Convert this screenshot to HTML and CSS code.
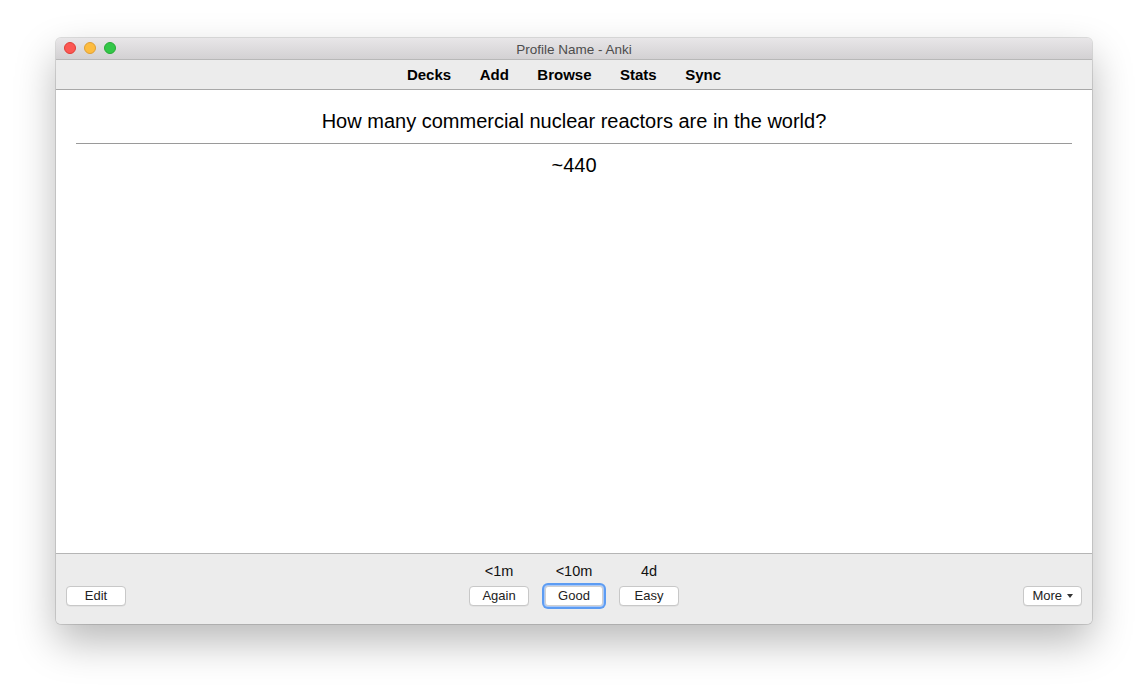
FILE: index.html
```html
<!DOCTYPE html>
<html>
<head>
<meta charset="utf-8">
<link rel="stylesheet" href="styles.css">
</head>
<body>
<div class="window">
  <div class="titlebar">
    <div class="lights">
      <span class="light red"></span>
      <span class="light yellow"></span>
      <span class="light green"></span>
    </div>
    <div class="title">Profile Name - Anki</div>
  </div>
  <div class="toolbar">
    <span class="tb">Decks</span>
    <span class="tb">Add</span>
    <span class="tb">Browse</span>
    <span class="tb">Stats</span>
    <span class="tb">Sync</span>
  </div>
  <div class="content">
    <div class="q">How many commercial nuclear reactors are in the world?</div>
    <hr class="sep">
    <div class="a">~440</div>
  </div>
  <div class="bottombar">
    <div class="side left"><button class="btn">Edit</button></div>
    <div class="answers">
      <div class="ans"><div class="lab">&lt;1m</div><button class="btn">Again</button></div>
      <div class="ans"><div class="lab">&lt;10m</div><button class="btn focus">Good</button></div>
      <div class="ans"><div class="lab">4d</div><button class="btn">Easy</button></div>
    </div>
    <div class="side right"><button class="btn more">More <span class="caret"></span></button></div>
  </div>
</div>
</body>
</html>
```
FILE: styles.css
```css
html, body {
  margin: 0;
  padding: 0;
  background: #ffffff;
  font-family: "Liberation Sans", Arial, sans-serif;
}
body {
  padding: 38px 56px 0 56px;
  height: 698px;
  box-sizing: border-box;
}
.window {
  width: 1036px;
  height: 586px;
  border-radius: 5px;
  overflow: hidden;
  display: flex;
  flex-direction: column;
  box-shadow: 0 0 0 1px rgba(0,0,0,0.12), 0 18px 40px rgba(0,0,0,0.28);
  background: #ececec;
}
.titlebar {
  height: 22px;
  flex: none;
  background: linear-gradient(#e8e6e8, #d3d1d3);
  position: relative;
  display: flex;
  align-items: center;
  justify-content: center;
  border-bottom: 1px solid #b8b8b8;
  box-sizing: border-box;
}
.lights {
  position: absolute;
  left: 8px;
  top: 4px;
  display: flex;
  gap: 8px;
}
.light {
  width: 12px;
  height: 12px;
  border-radius: 50%;
  box-sizing: border-box;
}
.red { background: #fc5753; border: 0.5px solid #df3d35; }
.yellow { background: #fdbc40; border: 0.5px solid #de9f34; }
.green { background: #33c748; border: 0.5px solid #27aa35; }
.title {
  font-size: 13.5px;
  color: #4d4d4d;
  padding-top: 1px;
}
.toolbar {
  height: 30px;
  flex: none;
  box-sizing: border-box;
  background: #ececec;
  border-bottom: 1px solid #a8a8a8;
  display: flex;
  justify-content: center;
  align-items: center;
  padding: 0 20px 0 0;
}
.tb {
  font-size: 15px;
  font-weight: bold;
  color: #000;
  padding: 0 14.25px;
  line-height: 17px;
  margin-bottom: 1px;
}
.content {
  flex: 1;
  background: #ffffff;
  padding: 20px 20px;
  text-align: center;
  color: #000;
  font-size: 20px;
}
.q {
  line-height: 23px;
}
.sep {
  border: none;
  border-top: 1px solid #9a9a9a;
  margin: 10px 0 10px 0;
  height: 0;
}
.a {
  line-height: 23px;
  margin-top: 1px;
}
.bottombar {
  height: 71px;
  flex: none;
  box-sizing: border-box;
  border-top: 1px solid #b5b5b5;
  background: #ececec;
  display: flex;
  align-items: flex-end;
  padding: 0 10px 18px 10px;
}
.side {
  flex: 1;
  display: flex;
}
.side.right {
  justify-content: flex-end;
}
.answers {
  display: flex;
  gap: 15px;
  align-items: flex-end;
}
.ans {
  display: flex;
  flex-direction: column;
  align-items: center;
  gap: 7px;
}
.lab {
  font-size: 14.5px;
  color: #111;
  line-height: 16px;
}
.btn {
  width: 60px;
  height: 20px;
  box-sizing: border-box;
  background: #ffffff;
  border: 1px solid #c8c8c8;
  border-radius: 4px;
  font-family: "Liberation Sans", Arial, sans-serif;
  font-size: 13px;
  color: #222;
  padding: 0;
  line-height: 18px;
  box-shadow: 0 0.5px 0.5px rgba(0,0,0,0.08);
}
.btn.focus {
  width: 58px;
  margin: 0 1px;
  border-color: #d0d0d0;
  box-shadow: 0 0 0 1px #a9c8f7, 0 0 0 3px #5c9cf3;
  border-radius: 3px;
}
.btn.more {
  width: 59px;
}
.caret {
  display: inline-block;
  width: 0;
  height: 0;
  border-left: 3.5px solid transparent;
  border-right: 3.5px solid transparent;
  border-top: 4px solid #333;
  vertical-align: middle;
  margin-left: 1px;
  margin-bottom: 2px;
}
```
